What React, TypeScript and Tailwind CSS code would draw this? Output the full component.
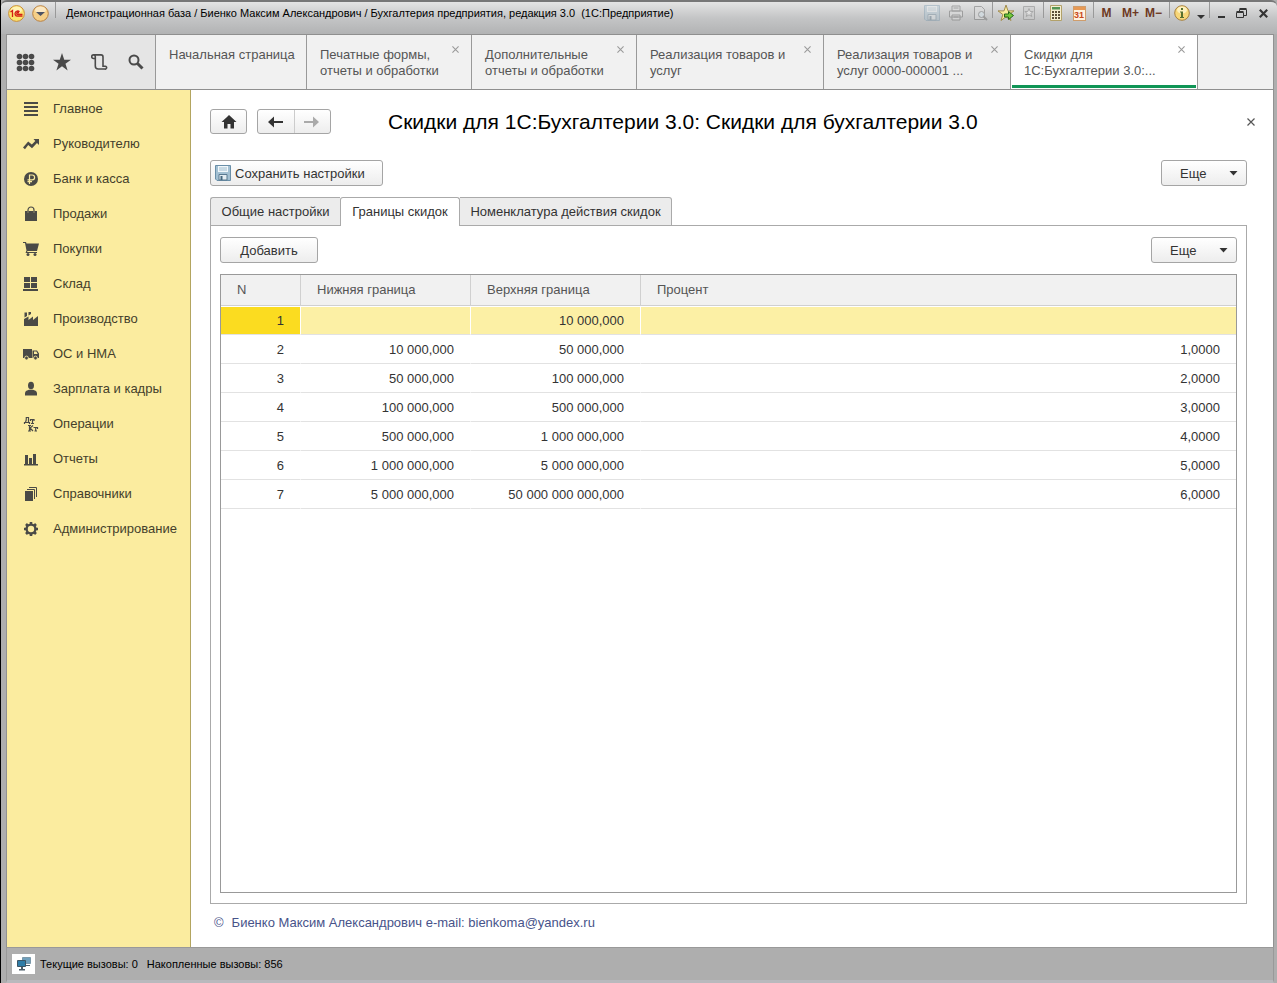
import React from "react";

type IconProps = { children: React.ReactNode; size?: string; box?: string };

function Icon({ children, size = "size-4", box = "0 0 16 16" }: IconProps) {
  return (
    <svg viewBox={box} className={`${size} shrink-0`} fill="currentColor" aria-hidden="true">
      {children}
    </svg>
  );
}

const starPath = "M8 0l2 5.9h6l-4.9 3.6 1.9 6L8 11.800l-5 3.700 1.900-6L0 5.900h6z";

const sections: { label: string; icon: React.ReactNode }[] = [
  { label: "Главное", icon: <path d="M1 1h14v2H1zM1 5h14v2H1zM1 9h14v2H1zM1 13h14v2H1z" /> },
  {
    label: "Руководителю",
    icon: <path d="M0 11.500L5.200 5.500l3.600 3L12.300 5 10.500 3H16v6l-2-2-5 5.300-3.800-3.300L2 13.300z" />,
  },
  {
    label: "Банк и касса",
    icon: (
      <>
        <circle cx="8" cy="8" r="7" />
        <path d="M6.500 13V4h2.700a2.300 2.300 0 0 1 0 4.800H4.500M4.500 10.700h4.500" fill="none" stroke="#fbec9f" strokeWidth="1.200" />
      </>
    ),
  },
  {
    label: "Продажи",
    icon: (
      <>
        <path d="M2 5h2.500v2h1V5h5v2h1V5H14v10H2z" />
        <path d="M5 7V4a3 3 0 0 1 6 0v3" fill="none" stroke="currentColor" strokeWidth="1.200" />
      </>
    ),
  },
  {
    label: "Покупки",
    icon: (
      <>
        <path d="M0 1h3l.5 1.500H16L14 10H4.500l-.5 1h10v1H2.500l1-2.500L2 2H0z" />
        <circle cx="5" cy="13.500" r="1.500" />
        <circle cx="12" cy="13.500" r="1.500" />
      </>
    ),
  },
  { label: "Склад", icon: <path d="M1 1h6v5H1zM8 1h6v5H8zM1 7h6v5H1zM8 7h6v5H8zM0 13h15v2H0z" /> },
  {
    label: "Производство",
    icon: <path d="M1 15V8l4.500-2.500V9L10 5.500V9l5-4v10zM1.500 1.500h2.500V5l-2.500 1.500zM5.500 1H8v2L5.500 4.500z" />,
  },
  {
    label: "ОС и НМА",
    icon: (
      <>
        <path d="M0 3h9v9H0zM9.500 4.500H14l2 3V12H9.500zM11 5.500V8h3.700l-1.300-2.500z" fillRule="evenodd" />
        <circle cx="3.500" cy="12" r="1.900" stroke="#fbec9f" strokeWidth=".8" />
        <circle cx="12.500" cy="12" r="1.900" stroke="#fbec9f" strokeWidth=".8" />
      </>
    ),
  },
  {
    label: "Зарплата и кадры",
    icon: (
      <>
        <ellipse cx="8" cy="4.500" rx="3" ry="3.800" />
        <path d="M2 14.500v-2.300C2 10 4.500 9.200 6 8.700h4c1.500.500 4 1.300 4 3.500v2.300z" />
      </>
    ),
  },
  {
    label: "Операции",
    icon: (
      <>
        <path
          d="M1 6.500h6M1.500 8V6M6.500 8V6M2.500 6c1-1.500.8-3 .8-4.500h2.200V6.500M7 3.500h4.500M9.500 3.500v4M8 7.500h3M7.500 3v2M11 3v2"
          fill="none"
          stroke="currentColor"
          strokeWidth="1.200"
        />
        <path
          d="M6.500 9v6M5 15h3M10 9.500L7 12l3 3M5 9.500h3M10.500 11.500H15M12.700 11.500v4M11.500 15h2.500M14.500 11v2"
          fill="none"
          stroke="currentColor"
          strokeWidth="1.200"
        />
      </>
    ),
  },
  { label: "Отчеты", icon: <path d="M2 4h3v9H2zM6 7h3v6H6zM10 3h3v10h-3zM1 13h14v1.500H1z" /> },
  {
    label: "Справочники",
    icon: (
      <>
        <path d="M2 5h8v10H2z" />
        <path d="M4 3.500h7.500V13M6 1.500h7.500V11" fill="none" stroke="currentColor" />
      </>
    ),
  },
  {
    label: "Администрирование",
    icon: (
      <>
        <circle cx="8" cy="8" r="4.400" fill="none" stroke="currentColor" strokeWidth="2.400" />
        <path d="M8 1v2.500M8 12.500V15M1 8h2.500M12.500 8H15M3 3l2 2M11 11l2 2M3 13l2-2M11 5l2-2" stroke="currentColor" strokeWidth="2.600" />
      </>
    ),
  },
];

const pages = [
  { lines: ["Начальная страница"], width: "w-[151px]", closable: false, active: false },
  { lines: ["Печатные формы,", "отчеты и обработки"], width: "w-[165px]", closable: true, active: false },
  { lines: ["Дополнительные", "отчеты и обработки"], width: "w-[165px]", closable: true, active: false },
  { lines: ["Реализация товаров и", "услуг"], width: "w-[187px]", closable: true, active: false },
  { lines: ["Реализация товаров и", "услуг 0000-000001 ..."], width: "w-[187px]", closable: true, active: false },
  { lines: ["Скидки для", "1С:Бухгалтерии 3.0:..."], width: "w-[187px]", closable: true, active: true },
];

const rows = [
  ["1", "", "10 000,000", ""],
  ["2", "10 000,000", "50 000,000", "1,0000"],
  ["3", "50 000,000", "100 000,000", "2,0000"],
  ["4", "100 000,000", "500 000,000", "3,0000"],
  ["5", "500 000,000", "1 000 000,000", "4,0000"],
  ["6", "1 000 000,000", "5 000 000,000", "5,0000"],
  ["7", "5 000 000,000", "50 000 000 000,000", "6,0000"],
];

const buttonLook =
  "flex items-center rounded-[3px] border border-[#a5a5a5] bg-linear-to-b from-white to-[#ededed] text-[#333]";

function Cross({ size }: { size: string }) {
  return (
    <Icon size={size} box="0 0 8 8">
      <path d="M.5.500l7 7M7.500.500l-7 7" stroke="currentColor" strokeWidth="1.200" />
    </Icon>
  );
}

function Floppy() {
  return (
    <Icon>
      <path d="M.5.500h15v15H2L.5 14z" fill="#a3c0d2" stroke="#6a8fa8" />
      <path d="M3 1h10v6H3z" fill="#f1f7fa" />
      <path d="M4 3h8M4 5h8" stroke="#9fbccd" />
      <path d="M4 9.500h8V15H4z" fill="#e4edf2" stroke="#5b7a90" />
      <path d="M5.500 11h2v4h-2z" fill="#46687f" />
    </Icon>
  );
}

function MoreButton() {
  return (
    <button type="button" className={`${buttonLook} h-[26px] w-[86px] justify-between pt-px pr-2 pl-[18px]`}>
      Еще
      <Icon size="h-[5px] w-[9px]" box="0 0 9 5">
        <path d="M.5 0h8L4.500 4.500z" />
      </Icon>
    </button>
  );
}

function Divider() {
  return <span className="mb-1.5 h-4 w-px bg-[#999]" />;
}

function ToolButton({ label, children, width = "w-[23px]" }: { label: string; children: React.ReactNode; width?: string }) {
  return (
    <button type="button" aria-label={label} className={`${width} flex h-5 shrink-0 items-center justify-center`}>
      {children}
    </button>
  );
}

function TitleBar() {
  return (
    <header className="flex h-[34px] shrink-0 items-start rounded-t-md border-t-2 border-[#777] bg-linear-to-b from-[#e4e4e4] via-[#c4c5c6] to-[#b2b3b4] pl-[7px] text-black">
      <div className="flex h-[22px] items-center">
        <Icon size="size-[17px]" box="0 0 17 17">
          <circle cx="8.500" cy="8.500" r="7.900" fill="#fbe36d" stroke="#c98e3c" />
          <ellipse cx="8.500" cy="5" rx="5.500" ry="3.500" fill="#fff3b2" />
          <path
            d="M2.500 7l2-1.500V12M11.500 6.800A2.600 2.600 0 1 0 9.300 11.200H14.500M10.700 8.300a1 1 0 1 0-1 1.200H14.500"
            fill="none"
            stroke="#d41f16"
            strokeWidth="1.300"
          />
        </Icon>
        <button type="button" aria-label="Меню" className="ml-[7px]">
          <Icon size="size-[17px]" box="0 0 17 17">
            <circle cx="8.500" cy="8.500" r="7.800" fill="#f5cf87" stroke="#b98242" />
            <ellipse cx="8.500" cy="5" rx="5.500" ry="3.500" fill="#fbe8c3" />
            <path d="M4 7h9l-4.500 4z" fill="#4c5364" />
          </Icon>
        </button>
        <span className="mx-[6px] flex"><Divider /></span>
      </div>
      <h1 className="ml-1 flex-1 truncate text-[11px] leading-[22px]">
        Демонстрационная база / Биенко Максим Александрович / Бухгалтерия предприятия, редакция 3.0&nbsp; (1С:Предприятие)
      </h1>
      <div className="flex shrink-0 items-center pr-[2px]">
        <ToolButton label="Сохранить">
          <span className="opacity-35"><Floppy /></span>
        </ToolButton>
        <ToolButton label="Печать" width="w-[25px]">
          <span className="text-[#777] opacity-55">
            <Icon>
              <path d="M4 1h8v5H4zM1.500 6h13v6h-13zM4 10h8v5H4z" fill="#ddd" stroke="currentColor" />
              <path d="M5.500 3h5M5.500 12h5" stroke="currentColor" />
            </Icon>
          </span>
        </ToolButton>
        <ToolButton label="Просмотр">
          <span className="text-[#777] opacity-55">
            <Icon>
              <path d="M2.500 1.500h7l3 3v10h-10z" fill="#ddd" stroke="currentColor" />
              <circle cx="9.500" cy="9.500" r="3" fill="#d6e4ec" stroke="currentColor" />
              <path d="M11.500 11.500L15 15" stroke="currentColor" strokeWidth="2" />
            </Icon>
          </span>
        </ToolButton>
        <span className="mx-px flex"><Divider /></span>
        <ToolButton label="В избранное">
          <Icon>
            <path d={starPath} fill="#f9ec9d" stroke="#a18b4f" />
            <path d="M6.500 9h4V6.500l5 4-5 4V12h-4z" fill="#75cb3b" stroke="#28661d" />
          </Icon>
        </ToolButton>
        <ToolButton label="Избранное">
          <span className="text-[#888] opacity-55">
            <Icon>
              <path d="M2.500 1.500h11v13h-11z" fill="#ccc" stroke="currentColor" />
              <path d="M8 3.500l1.200 3h3L9.800 8.500l1 3L8 9.800l-2.800 1.700 1-3-2.400-2h3z" fill="#eee" stroke="currentColor" />
            </Icon>
          </span>
        </ToolButton>
        <span className="ml-[3px] flex"><Divider /></span>
        <ToolButton label="Калькулятор">
          <Icon>
            <path d="M2.500.500h11v15h-11z" fill="#f6efcf" stroke="#b2a16a" />
            <path d="M4 2h8v2.500H4z" fill="#559554" />
            <path d="M4 7h8M4 10h8M4 13h8" stroke="#5c5038" strokeWidth="1.800" strokeDasharray="2 1" />
          </Icon>
        </ToolButton>
        <ToolButton label="Календарь" width="w-6">
          <span className="flex h-[15px] w-[13px] flex-col items-center border border-[#cf9d6c] bg-[#fff3df] text-[9px] leading-[10px] font-bold text-[#c84820]">
            <span className="h-[3px] w-full shrink-0 bg-[#e79955]" />
            31
          </span>
        </ToolButton>
        <span className="ml-[2px] flex"><Divider /></span>
        <button type="button" className="h-5 w-[25px] text-xs font-bold text-[#6d3923]">M</button>
        <button type="button" className="h-5 w-[23px] text-xs font-bold text-[#6d3923]">M+</button>
        <button type="button" className="h-5 w-[23px] text-xs font-bold text-[#6d3923]">M−</button>
        <span className="ml-1 flex"><Divider /></span>
        <ToolButton label="О программе">
          <Icon>
            <circle cx="8" cy="8" r="7.300" fill="#f8d779" stroke="#a7813e" />
            <ellipse cx="8" cy="5" rx="5" ry="3.500" fill="#fdf0bd" />
            <path d="M7 3h2v2H7zM6 6.500h3V12h1v1H6v-1h1V7.500H6z" fill="#58702f" />
          </Icon>
        </ToolButton>
        <ToolButton label="Дополнительно" width="w-4">
          <span className="pt-2">
            <Icon size="h-1 w-2" box="0 0 8 4"><path d="M0 0h8L4 4z" fill="#333" /></Icon>
          </span>
        </ToolButton>
        <Divider />
        <ToolButton label="Свернуть" width="w-[22px]">
          <span className="mt-2 h-[2px] w-[7px] bg-[#333]" />
        </ToolButton>
        <ToolButton label="Восстановить" width="w-[19px]">
          <Icon size="size-[11px]" box="0 0 11 11">
            <path d="M.5 4.500h7v5h-7zM.5 3.500h7M3.500 3V1.500h7v6H8M3.500.500h7" fill="none" stroke="#333" />
          </Icon>
        </ToolButton>
        <ToolButton label="Закрыть окно" width="w-6">
          <Icon size="size-[9px]" box="0 0 8 8"><path d="M.7.700l6.600 6.600M7.300.700L.7 7.300" stroke="#333" strokeWidth="1.900" /></Icon>
        </ToolButton>
      </div>
    </header>
  );
}

function PageTabs() {
  return (
    <nav className="flex h-14 shrink-0 border-y border-[#8f8f8f] bg-[#f1f1f1] text-[#555]">
      <div className="flex w-[149px] shrink-0 items-center border-r border-[#999] bg-[#e5e5e5] pl-[9px] text-[#4a4a4a]">
        <button type="button" aria-label="Все функции" className="w-[37px]">
          <Icon size="size-[19px]" box="0 0 19 19">
            {[3.5, 9.5, 15.5].map((y) => [3.5, 9.5, 15.5].map((x) => <circle key={`${x}-${y}`} cx={x} cy={y} r="2.800" />))}
          </Icon>
        </button>
        <button type="button" aria-label="Избранное" className="w-[38px]">
          <Icon size="size-[18px]"><path d={starPath} /></Icon>
        </button>
        <button type="button" aria-label="История" className="w-[37px]">
          <Icon size="size-[17px]" box="0 0 17 17">
            <path
              d="M4 4.500H2.500a1.800 1.800 0 1 1 1.800-2V12a3 3 0 0 0 3 3H14M3 .900h7a2 2 0 0 1 2 2v9.400h2.300a1.400 1.400 0 1 1-.8 2.600"
              fill="none"
              stroke="currentColor"
              strokeWidth="1.600"
            />
          </Icon>
        </button>
        <button type="button" aria-label="Поиск">
          <Icon>
            <circle cx="6" cy="6" r="4.500" fill="none" stroke="currentColor" strokeWidth="2" />
            <path d="M9.500 9.500L14.500 14.500" stroke="currentColor" strokeWidth="3" />
          </Icon>
        </button>
      </div>
      {pages.map((page, i) => (
        <div
          key={i}
          className={`${page.width} flex shrink-0 items-start justify-between border-r border-[#999] pt-[11px] pl-[13px] ${
            page.active
              ? "bg-white shadow-[inset_1px_0_0_#fff,inset_-1px_0_0_#fff,inset_0_-1px_0_#fff,inset_0_-4px_0_#109556]"
              : ""
          }`}
        >
          <a href="#" className="pt-px leading-4 whitespace-nowrap">
            {page.lines.map((line) => (
              <span key={line} className="block">{line}</span>
            ))}
          </a>
          {page.closable && (
            <button type="button" aria-label="Закрыть вкладку" className="mr-3 text-[#999]">
              <Cross size="size-[7px]" />
            </button>
          )}
        </div>
      ))}
    </nav>
  );
}

function BoundsTable() {
  return (
    <div className="flex-1 border border-[#999] bg-white">
      <table className="w-full table-fixed border-separate border-spacing-0">
        <thead>
          <tr className="h-[31px] bg-[#f1f1f1] text-left text-[#555]">
            <th className="w-20 border-r border-b border-[#d0d0d0] pl-4 font-normal">N</th>
            <th className="w-[170px] border-r border-b border-[#d0d0d0] pl-4 font-normal">Нижняя граница</th>
            <th className="w-[170px] border-r border-b border-[#d0d0d0] pl-4 font-normal">Верхняя граница</th>
            <th className="border-b border-[#d0d0d0] pl-4 font-normal">Процент</th>
          </tr>
        </thead>
        <tbody>
          {rows.map((row, r) => (
            <tr key={row[0]} className={`h-[29px] text-right ${r === 0 ? "bg-[#fcf0a5]" : ""}`}>
              {row.map((cell, c) => (
                <td
                  key={c}
                  className={`border-b border-b-[#e2e2e2] pt-[2px] pr-4 pb-0 ${c < 3 ? "border-r border-r-white" : ""} ${
                    r === 0 ? "shadow-[inset_0_1px_0_#fff]" : ""
                  } ${r === 0 && c === 0 ? "bg-[#fbdc20]" : ""}`}
                >
                  {cell}
                </td>
              ))}
            </tr>
          ))}
        </tbody>
      </table>
    </div>
  );
}

export default function App() {
  return (
    <div className="flex h-screen min-h-[640px] flex-col border-l border-black bg-[#aeaeae] font-['Liberation_Sans',Arial,sans-serif] text-[13px] text-[#333]">
      <TitleBar />
      <div className="mr-[3px] ml-[5px] flex min-h-0 flex-1 flex-col border-x border-[#929292]">
        <PageTabs />
        <div className="flex min-h-0 flex-1">
          <aside className="w-[184px] shrink-0 border-r border-[#b3a560] bg-[#fbec9f] pt-px">
            <ul>
              {sections.map((section) => (
                <li key={section.label}>
                  <a href="#" className="flex h-[35px] items-center gap-[14px] pl-4 whitespace-nowrap text-[#443f2c]">
                    <span className="flex text-[#4a4a46]"><Icon>{section.icon}</Icon></span>
                    {section.label}
                  </a>
                </li>
              ))}
            </ul>
          </aside>
          <main className="flex min-w-0 flex-1 flex-col bg-white pt-[19px] pr-[26px] pb-4 pl-[19px]">
            <div className="flex h-[25px] shrink-0 items-center">
              <button type="button" aria-label="Домой" className={`${buttonLook} h-[25px] w-[37px] justify-center`}>
                <Icon><path d="M8 1l7.500 7H13v6.500H9.500V10h-3v4.500H3V8H.5L6 3z" /></Icon>
              </button>
              <div className={`${buttonLook} ml-[10px] h-[25px] w-[74px]`}>
                <button type="button" aria-label="Назад" className="flex h-full flex-1 items-center justify-center border-r border-[#ccc]">
                  <Icon size="h-3 w-4" box="0 0 16 12"><path d="M0 6l6-5.500V5h9v2H6v4.500z" /></Icon>
                </button>
                <button type="button" aria-label="Вперед" className="flex h-full flex-1 items-center justify-center text-[#aaa]">
                  <Icon size="h-3 w-4" box="0 0 16 12"><path d="M15 6L9 .500V5H0v2h9v4.500z" /></Icon>
                </button>
              </div>
              <h2 className="ml-[57px] flex-1 truncate pt-px text-[21px] leading-7 text-black">
                Скидки для 1С:Бухгалтерии 3.0: Скидки для бухгалтерии 3.0
              </h2>
              <button type="button" aria-label="Закрыть" className="-mr-2 text-[#555]"><Cross size="size-2" /></button>
            </div>
            <div className="mt-[26px] flex shrink-0 justify-between">
              <button type="button" className={`${buttonLook} h-[26px] w-[173px] gap-1 pl-1`}>
                <Floppy />
                <span className="pt-px">Сохранить настройки</span>
              </button>
              <MoreButton />
            </div>
            <div role="tablist" className="z-10 mt-[11px] -mb-px flex h-[29px] shrink-0">
              <button type="button" role="tab" aria-selected="false" className="w-[130px] rounded-tl-[3px] border border-r-0 border-[#aaa] bg-[#ececec]">
                Общие настройки
              </button>
              <button type="button" role="tab" aria-selected="true" className="w-[120px] rounded-t-[3px] border border-b-0 border-[#aaa] bg-white">
                Границы скидок
              </button>
              <button type="button" role="tab" aria-selected="false" className="w-[212px] rounded-tr-[3px] border border-l-0 border-[#aaa] bg-[#ececec]">
                Номенклатура действия скидок
              </button>
            </div>
            <section className="flex min-h-0 flex-1 flex-col border border-[#aaa] px-[9px] pt-[11px] pb-[10px]">
              <div className="mb-[11px] flex shrink-0 justify-between">
                <button type="button" className={`${buttonLook} h-[26px] w-[98px] justify-center pt-px`}>Добавить</button>
                <MoreButton />
              </div>
              <BoundsTable />
            </section>
            <footer className="mt-[11px] flex shrink-0 gap-2 pl-1 leading-4 text-[#47538a]">
              <span>©</span>
              <span>Биенко Максим Александрович e-mail: bienkoma@yandex.ru</span>
            </footer>
          </main>
        </div>
      </div>
      <footer className="mr-[3px] ml-[5px] flex h-9 shrink-0 items-center gap-[5px] border-x border-t border-[#999] border-b-[3px] border-b-[#b9b9bd] pl-[5px] text-[11px] text-black">
        <button type="button" aria-label="Показатели производительности" className="flex h-5 w-[23px] items-center justify-center bg-white">
          <Icon>
            <path d="M6.500 1.500h8v6h-8z" fill="#6fa0bd" stroke="#7b99aa" />
            <path d="M1.500 4.500h8v6h-8z" fill="#2f7da8" stroke="#3c5565" />
            <path d="M5 11h2v2H5zM3 13h6v1.500H3zM10 9h4v1h-4z" fill="#4b5d69" />
          </Icon>
        </button>
        <span className="pt-px">Текущие вызовы: 0</span>
        <span className="pt-px pl-1">Накопленные вызовы: 856</span>
      </footer>
    </div>
  );
}
